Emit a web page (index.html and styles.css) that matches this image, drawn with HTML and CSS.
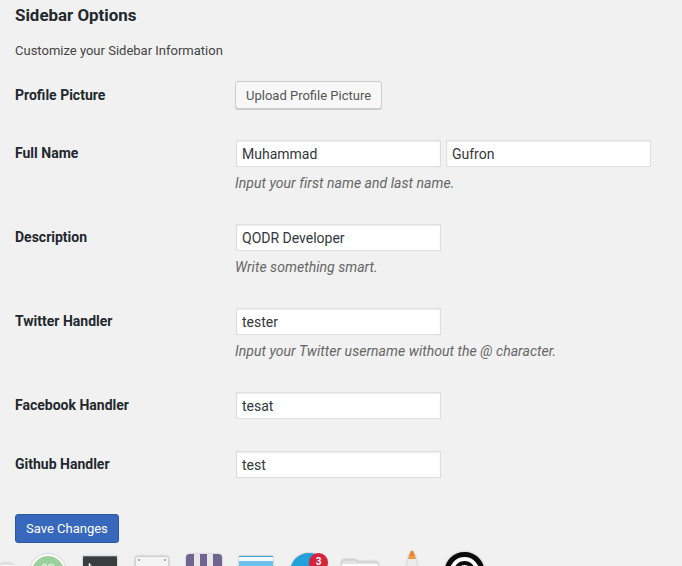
FILE: index.html
```html
<!DOCTYPE html>
<html lang="en">
<head>
    <meta charset="UTF-8">
    <title>Sidebar Options</title>
    <link rel="stylesheet" href="styles.css">
</head>
<body>
    <h2 class="title">Sidebar Options</h2>
    <p class="intro">Customize your Sidebar Information</p>

    <form class="options">
        <div class="row row-picture">
            <label class="label">Profile Picture</label>
            <div class="field"><button type="button" class="button">Upload Profile Picture</button></div>
        </div>
        <div class="row row-hint">
            <label class="label">Full Name</label>
            <div class="field">
                <div class="inputs">
                    <input class="text" type="text" value="Muhammad">
                    <input class="text" type="text" value="Gufron">
                </div>
                <p class="hint">Input your first name and last name.</p>
            </div>
        </div>
        <div class="row row-hint">
            <label class="label">Description</label>
            <div class="field">
                <input class="text" type="text" value="QODR Developer">
                <p class="hint">Write something smart.</p>
            </div>
        </div>
        <div class="row row-hint">
            <label class="label">Twitter Handler</label>
            <div class="field">
                <input class="text" type="text" value="tester">
                <p class="hint">Input your Twitter username without the @ character.</p>
            </div>
        </div>
        <div class="row row-plain">
            <label class="label">Facebook Handler</label>
            <div class="field"><input class="text" type="text" value="tesat"></div>
        </div>
        <div class="row row-plain">
            <label class="label">Github Handler</label>
            <div class="field"><input class="text" type="text" value="test"></div>
        </div>
        <button type="button" class="button-primary">Save Changes</button>
    </form>

    <!-- dock peeking in at the bottom of the window -->
    <div class="dock">
        <svg class="dock-icon" style="left:-20px;top:15px" width="36" height="20"><path d="M0 5h20q1-3 3-3h6q2 0 3 2q2 0 2 2v14H0z" fill="#e2e2e2"/><path d="M0 5h34" stroke="#fbfbfb" stroke-width="2"/></svg>
        <svg class="dock-icon" style="left:30px;top:8px" width="36" height="20"><circle cx="18" cy="18" r="18" fill="#fdfdfd"/><circle cx="18" cy="18" r="16" fill="#9bd09a"/><path d="M12 12c2-3 4-2 5 1c1 2 1 3 1 5m0-5c1-3 4-4 6-1" fill="none" stroke="#d8efd6" stroke-width="1.6"/></svg>
        <svg class="dock-icon" style="left:83px;top:10px" width="34" height="20"><rect width="34" height="20" rx="2" fill="#3a3d3d"/><rect width="34" height="1" fill="#6b6e6e"/><path d="M6.500 7v9M8.500 9h-3M8.500 12h-3" stroke="#eee" stroke-width="1.200"/></svg>
        <svg class="dock-icon" style="left:135px;top:10px" width="34" height="20"><rect x=".5" y=".5" width="33" height="20" rx="2" fill="#f3f3f3" stroke="#d0d0d0"/><circle cx="4" cy="4" r="1" fill="#999"/><circle cx="30" cy="4" r="1" fill="#999"/></svg>
        <svg class="dock-icon" style="left:186px;top:8px" width="36" height="20"><rect width="36" height="20" rx="4" fill="#6f6491"/><rect x="8" width="6" height="20" fill="#e6e6e6"/><rect x="21" width="6" height="20" fill="#e6e6e6"/></svg>
        <svg class="dock-icon" style="left:239px;top:10px" width="34" height="20"><rect width="34" height="20" rx="1" fill="#6cc0ea"/><rect width="34" height="1" fill="#3f9fd6"/><rect y="1" width="34" height="4" fill="#f2f7fa"/></svg>
        <svg class="dock-icon" style="left:290px;top:7px" width="38" height="20"><circle cx="19" cy="19" r="19" fill="#23a0dc"/></svg>
        <span class="dock-badge">3</span>
        <svg class="dock-icon" style="left:341px;top:12px" width="38" height="20"><path d="M1 20V4q0-2 2-2h11l3 2h18q2 0 2 2v14z" fill="#e2e2e2" stroke="#cfcfcf"/><path d="M1 7h36" stroke="#fbfbfb" stroke-width="2"/></svg>
        <svg class="dock-icon" style="left:400px;top:5px" width="24" height="20"><path d="M9 5l2-5h2l2 5z" fill="#e9842a"/><path d="M9 5h6l1 3H8z" fill="#f09a3e"/><path d="M8 8h8l2 12H6z" fill="#ececec"/></svg>
        <svg class="dock-icon" style="left:444px;top:6px" width="42" height="20"><circle cx="20.500" cy="20" r="17.500" fill="#fff" stroke="#0a0a0a" stroke-width="5"/><circle cx="20.500" cy="20" r="9" fill="#fff" stroke="#0a0a0a" stroke-width="4"/></svg>
    </div>
</body>
</html>
```

FILE: styles.css
```css
html, body {
    height: 566px;
    overflow: hidden;
}
body {
    margin: 0;
    padding: 0 15px;
    position: relative;
    background: #f1f1f1;
    color: #444;
    font-family: Roboto, sans-serif;
    font-size: 13px;
}
.title {
    margin: 0;
    padding-top: 5px;
    color: #23282d;
    font-size: 16.9px;
    font-weight: 700;
    line-height: 20px;
}
.intro {
    margin: 18px 0 0;
    line-height: 15px;
}
.options {
    margin-top: 23px;
}
.row {
    display: flex;
    align-items: flex-start;
}
.row-picture {
    height: 59px;
}
.row-hint {
    height: 84px;
}
.row-plain {
    height: 59px;
}
.label {
    width: 220px;
    flex: none;
    margin-top: 6px;
    color: #23282d;
    font-size: 14px;
    font-weight: 700;
    line-height: 17px;
}
.field {
    flex: 1;
}
.row-hint .label, .row-plain .label {
    margin-top: 5px;
}
.row-hint .field, .row-plain .field {
    padding-left: 1px;
}
.inputs {
    display: flex;
    gap: 5px;
}
.text {
    display: block;
    box-sizing: border-box;
    width: 205px;
    height: 27px;
    margin: 0;
    padding: 0 5px;
    border: 1px solid #ddd;
    border-radius: 0;
    background: #fff;
    color: #32373c;
    font-family: Roboto, sans-serif;
    font-size: 14px;
    box-shadow: inset 0 1px 2px rgba(0,0,0,0.07);
}
.hint {
    margin: 8px 0 0 -1px;
    color: #666;
    font-size: 14px;
    font-style: italic;
    letter-spacing: 0.04px;
    line-height: 17px;
}
.button {
    display: block;
    box-sizing: border-box;
    height: 28px;
    padding: 0 10px;
    border: 1px solid #ccc;
    border-radius: 3px;
    background: #f7f7f7;
    color: #555;
    font-family: Roboto, sans-serif;
    font-size: 13px;
    box-shadow: 0 1px 0 #ccc;
}
.button-primary {
    display: block;
    box-sizing: border-box;
    height: 29px;
    margin-top: 4px;
    padding: 0 10px;
    border: 1px solid #2c5aa0;
    border-radius: 3px;
    background: #3768bc;
    color: #fff;
    font-family: Roboto, sans-serif;
    font-size: 13px;
}
.dock {
    position: absolute;
    left: 0;
    right: 0;
    bottom: 0;
    height: 20px;
    overflow: hidden;
}
.dock-icon {
    position: absolute;
    filter: drop-shadow(0 0 1px rgba(0,0,0,0.25));
}
.dock-badge {
    position: absolute;
    left: 309px;
    top: 7px;
    width: 19px;
    height: 19px;
    border-radius: 50%;
    background: #d8213b;
    color: #fff;
    font-size: 10px;
    font-weight: 700;
    line-height: 17px;
    text-align: center;
}
```
